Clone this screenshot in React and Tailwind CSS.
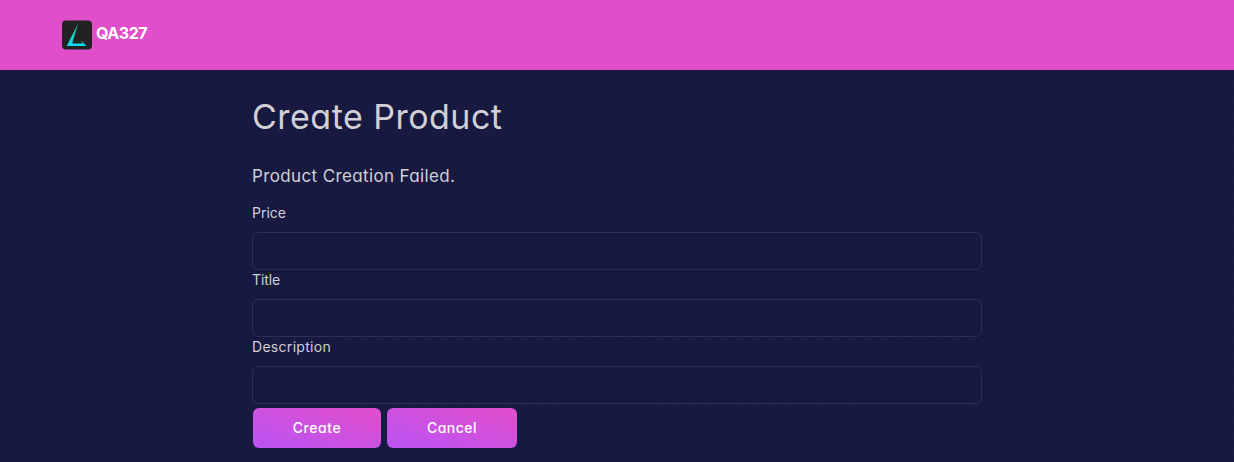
const DOT_ROWS = [1.5, 19.5, 35.5, 51, 66.5, 82.5, 98, 114, 130.5];

function DotGrid() {
  return (
    <svg className="absolute inset-0 h-full w-full" aria-hidden="true">
      <defs>
        <pattern id="dots" x="-8" y="9.5" width="16.43" height="146" patternUnits="userSpaceOnUse">
          {DOT_ROWS.map((y) => (
            <circle key={y} cx="8" cy={y} r="1.1" fill="#1f2148" />
          ))}
        </pattern>
      </defs>
      <rect width="100%" height="100%" fill="url(#dots)" />
    </svg>
  );
}

function Logo() {
  return (
    <svg className="h-[30px] w-[30px]" viewBox="0 0 30 30" aria-hidden="true">
      <defs>
        <linearGradient id="logo" x1="0" y1="0" x2="0" y2="1">
          <stop offset="0" stopColor="#20a98c" />
          <stop offset="0.5" stopColor="#1fd0b5" />
          <stop offset="1" stopColor="#08dcf5" />
        </linearGradient>
      </defs>
      <rect y="0.5" width="30" height="29" rx="4" fill="#222222" />
      <path d="M16.2 3L4.7 26H24.6L18.6 20.2L20.6 23.6H10.2Z" fill="url(#logo)" />
    </svg>
  );
}

function Field({ label, id, labelClass }) {
  return (
    <div className="h-[67px]">
      <label htmlFor={id} className={`block h-[29px] text-[14px] leading-5 ${labelClass}`}>
        {label}
      </label>
      <input
        id={id}
        className="block h-[38px] w-full rounded-[6px] border border-[#2b3053] bg-transparent px-4 text-sm outline-none"
      />
    </div>
  );
}

function Button({ children, className }) {
  return (
    <button
      className={`h-10 rounded-[6px] bg-[linear-gradient(to_bottom_left,#e14eca,#ba54f5)] text-[14px] leading-5 font-medium text-white ${className}`}
    >
      {children}
    </button>
  );
}

export default function App() {
  return (
    <div className="flex h-[462px] flex-col overflow-hidden bg-[#171941] font-['Inter','Liberation_Sans',sans-serif] text-[#d0d0d6] [font-feature-settings:'cv11']">
      <header className="flex h-[70px] shrink-0 items-center bg-[#e14eca] pl-[62px]">
        <Logo />
        <span className="mb-1 ml-1 text-[16px] leading-5 font-bold tracking-[-0.45px] text-white">QA327</span>
      </header>
      <main className="relative flex-1">
        <DotGrid />
        <div className="relative mx-auto w-[730px] pt-[25px]">
          <h1 className="h-[67px] text-[34px] leading-[44px] font-normal tracking-[0.48px]">Create Product</h1>
          <h4 className="h-[41px] text-[17px] leading-7 font-normal tracking-[0.37px]">Product Creation Failed.</h4>
          <form onSubmit={(e) => e.preventDefault()}>
            <Field id="price" label="Price" labelClass="tracking-[0px]" />
            <Field id="title" label="Title" labelClass="tracking-[-0.1px]" />
            <Field id="description" label="Description" labelClass="tracking-[0.3px]" />
            <div className="flex gap-1.5 pt-1 pl-px">
              <Button className="w-32 tracking-[0.55px]">Create</Button>
              <Button className="w-[130px] tracking-[0.5px]">Cancel</Button>
            </div>
          </form>
        </div>
      </main>
    </div>
  );
}
